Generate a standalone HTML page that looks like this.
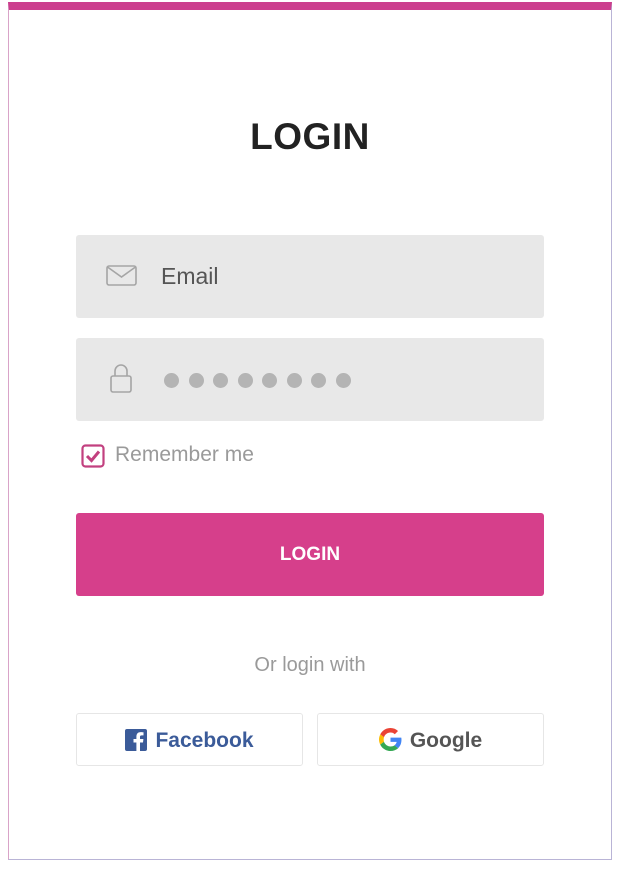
<!DOCTYPE html>
<html><head><style>
body{margin:0;width:620px;height:872px;background:#fff;font-family:"Liberation Sans",sans-serif;position:relative;overflow:hidden}
.card{position:absolute;left:8px;top:2px;width:602px;height:849px;border:1px solid #b9b4d6;border-top:8px solid #cc3f8e;border-left-color:#d9a3c8;box-sizing:content-box}
.abs{position:absolute}
.inp{position:absolute;left:76px;width:468px;height:83px;background:#e8e8e8;border-radius:3px}
h1{position:absolute;left:0;width:620px;top:116px;margin:0;text-align:center;font-size:37px;font-weight:bold;color:#222;letter-spacing:0.5px}
.dot{display:inline-block;width:15px;height:15px;border-radius:50%;background:#b4b4b4;margin-right:9.5px}
.soc{position:absolute;top:713px;width:227px;height:53px;border:1px solid #e6e6e6;border-radius:3px;box-sizing:border-box;font-size:21px;font-weight:bold;text-align:center;line-height:53px}
</style></head><body>
<div class="card"></div>
<h1>LOGIN</h1>
<div class="inp" style="top:235px">
 <svg class="abs" style="left:30px;top:30px" width="32" height="22" viewBox="0 0 32 22"><rect x="1" y="1" width="29" height="19" rx="2" fill="none" stroke="#a5a5a5" stroke-width="1.6"/><path d="M1.5 2 L15.5 12 L29.5 2" fill="none" stroke="#a5a5a5" stroke-width="1.6"/></svg>
 <span class="abs" style="left:85px;top:28px;font-size:23px;color:#555">Email</span>
</div>
<div class="inp" style="top:338px">
 <svg class="abs" style="left:34px;top:24px" width="22" height="32" viewBox="0 0 22 32"><path d="M5 14 V9 a6 6 0 0 1 12 0 V14" fill="none" stroke="#a5a5a5" stroke-width="1.6"/><rect x="1" y="14" width="20" height="16" rx="2" fill="none" stroke="#a5a5a5" stroke-width="1.6"/></svg>
 <div class="abs" style="left:88px;top:35px;white-space:nowrap"><span class="dot"></span><span class="dot"></span><span class="dot"></span><span class="dot"></span><span class="dot"></span><span class="dot"></span><span class="dot"></span><span class="dot"></span></div>
</div>
<svg class="abs" style="left:81px;top:444px" width="24" height="24" viewBox="0 0 24 24"><rect x="1.5" y="1.5" width="21" height="21" rx="3" fill="#fff" stroke="#c2407f" stroke-width="2.2"/><path d="M6 12 L10.5 16.5 L18 7.5" fill="none" stroke="#c2407f" stroke-width="3"/></svg>
<span class="abs" style="left:115px;top:443px;font-size:21px;color:#9a9a9a">Remember me</span>
<div class="abs" style="left:76px;top:513px;width:468px;height:83px;background:#d63f8b;border-radius:3px;color:#fff;font-weight:bold;font-size:19px;text-align:center;line-height:83px">LOGIN</div>
<div class="abs" style="left:0;width:620px;top:654px;text-align:center;font-size:20px;color:#9a9a9a">Or login with</div>
<div class="soc" style="left:76px;color:#3b5b99">
 <svg style="vertical-align:-4px;margin-right:8px" width="22" height="22" viewBox="0 0 22 22"><rect width="22" height="22" rx="2" fill="#3b5b99"/><path d="M15 22 V13.5 H18 L18.4 10 H15 V8 c0-1 .4-1.6 1.7-1.6 H18.5 V3.3 c-.4 0-1.5-.2-2.8-.2 c-2.7 0-4.3 1.6-4.3 4.5 V10 H8.5 V13.5 H11.4 V22 Z" fill="#fff"/></svg>Facebook</div>
<div class="soc" style="left:317px;color:#555">
 <svg style="vertical-align:-4px;margin-right:8px" width="23" height="23" viewBox="0 0 48 48"><path fill="#EA4335" d="M24 9.5c3.5 0 6.6 1.2 9 3.5l6.7-6.7C35.6 2.4 30.2 0 24 0 14.6 0 6.6 5.4 2.6 13.3l7.8 6C12.3 13.6 17.6 9.5 24 9.5z"/><path fill="#4285F4" d="M46.9 24.5c0-1.6-.1-3.1-.4-4.5H24v9h12.9c-.6 3-2.3 5.5-4.8 7.2l7.7 6c4.5-4.2 7.1-10.3 7.1-17.7z"/><path fill="#FBBC05" d="M10.5 28.7c-.5-1.5-.8-3-.8-4.7s.3-3.2.8-4.7l-7.8-6C1 16.6 0 20.2 0 24s1 7.4 2.6 10.7l7.9-6z"/><path fill="#34A853" d="M24 48c6.5 0 11.9-2.1 15.9-5.8l-7.7-6c-2.2 1.5-5 2.3-8.2 2.3-6.4 0-11.7-4.1-13.6-9.8l-7.9 6C6.6 42.6 14.6 48 24 48z"/></svg>Google</div>
</body></html>
